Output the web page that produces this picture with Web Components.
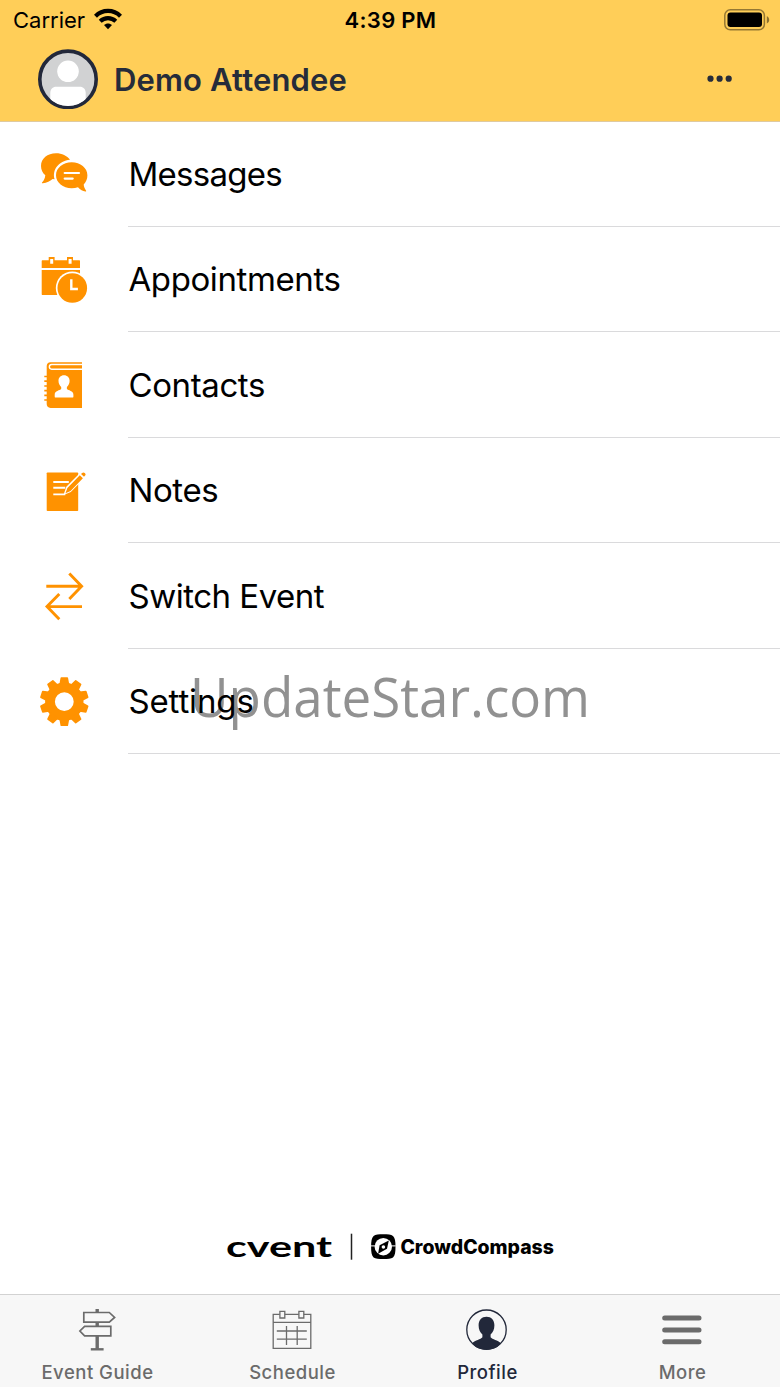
<!DOCTYPE html>
<html lang="en">
<head>
<meta charset="utf-8">
<title>Profile</title>
<style>
  body {
    margin: 0;
    background: #fff;
    font-family: Inter, Roboto, "Liberation Sans", sans-serif;
  }
</style>
</head>
<body>
<profile-screen></profile-screen>

<script>
const menuIcons = {
  messages: /*html*/`
    <path d="M17 4.3C8.500 4.300 2 9.500 2 17c0 4 1.700 7 4.300 9.200C6 29.500 4.800 31.500 3.200 33.200c-.6.700-.2 1.200.6 1C8 33.800 11 32.200 13.600 30l2 .2C13 21 19.500 12 31 10.800 28 6.800 23 4.300 17 4.300z"/>
    <path d="M32.700 13.300c-8.700 0-15.700 5.600-15.700 13s7 13 15.700 13c2.300 0 4.400-.3 6.300-1 2.300 2.500 4.800 3.900 7.300 4.200.8.100 1.100-.4.700-1-1.300-1.800-2.200-3.800-2.300-5.900 2.400-2.400 3.700-5.700 3.700-9.300 0-7.400-7-13-15.700-13z"/>
    <path d="M25.700 24h14.300M25.700 29.600h8" stroke="#fff" stroke-width="2.200" stroke-linecap="round"/>`,
  appointments: /*html*/`
    <path d="M3.200 5.300h6.500V2h5.900v3.300H28V2h6v3.300h6.500l.5.500V13H2.700V5.800zM2.700 15H41v25H3.200l-.5-.5z"/>
    <path d="M11.200 4h3v4.700h-3zM29.600 4h3v4.700h-3z" fill="#fff"/>
    <circle cx="33.300" cy="33" r="16.500" fill="#fff"/>
    <circle cx="33.300" cy="33" r="14.800"/>
    <path d="M32.300 24.300V34h6.600" fill="none" stroke="#fff" stroke-width="2.400"/>`,
  contacts: /*html*/`
    <path d="M11.500 2.200H43v45.700H11.500c-2.400 0-3.800-1.500-3.800-3.800V6c0-2.300 1.500-3.800 3.800-3.800z"/>
    <path d="M5.300 16.500h3M5.300 21.200h3M5.300 26h3M5.300 30.700h3M5.300 35.400h3M5.300 40h3" stroke="#ff9200" stroke-width="1.700"/>
    <path d="M43 4.500H12.600c-3 0-3 4.700 0 4.700H43" fill="none" stroke="#fff" stroke-width="1.400"/>
    <path d="M43 6.900H13" stroke="#ff9200" stroke-width="2"/>
    <path d="M25 15.200c-3.300 0-5.500 2.300-5.500 5.600 0 2.900 1.100 4.600 2.700 6.100v2.200c-1.300 1.400-6.500 1.700-6.500 5.700v1.600c0 .8.400 1.200 1.200 1.200h16.300c.8 0 1.200-.4 1.200-1.200v-1.600c0-4-5.200-4.300-6.500-5.700v-2.200c1.600-1.500 2.700-3.200 2.700-6.100 0-3.300-2.300-5.600-5.600-5.600z" fill="#fff"/>`,
  notes: /*html*/`
    <rect x="7.700" y="6.400" width="31.500" height="38.600" rx=".8"/>
    <path d="M14.300 16h15.500M14.300 21.800h12M14.300 28.400h12" stroke="#fff" stroke-width="1.900"/>
    <path d="M24.500 29l2.800-8.200L41.500 6.500l5 4.500-14.700 15z" fill="#fff"/>
    <path d="M26.500 27.300l1.900-5.400L40.800 9.300l3.100 3-12.300 12.800zM42 8l1.200-1.100c.8-.8 1.800-.6 2.600.1.900.8 1.100 1.800.3 2.600L45 10.800z"/>`,
  switch: /*html*/`
    <path d="M7.300 15.200h35M30.300 2.600l12.300 12.600-12.300 12.700M43 35.600H8.400M20.300 22.900L8 35.600l12.300 12.600" fill="none" stroke="#ff9200" stroke-width="2.900"/>`,
  settings: /*html*/`
    <circle cx="25.300" cy="24.700" r="14.300" fill="none" stroke="#ff9200" stroke-width="9.800"/>
    <g stroke="#ff9200" stroke-width="1.600" stroke-linejoin="round">
      ${[0, 36, 72, 108, 144, 180, 216, 252, 288, 324].map(angle => `<path d="M22.300 1.100h6l1.100 6H21.200z" transform="rotate(${angle} 25.300 24.700)"/>`).join('')}
    </g>`
}

const tabIcons = {
  guide: /*html*/`
    <g fill="none" stroke="currentColor" stroke-width="1.700">
      <path d="M9.800 5.500h25.500l5.300 4.900-5.300 4.700H9.800zM36.800 19.400H10.600l-4.700 4.600 4.700 4.800h26.200z"/>
      <path d="M23.200 2v3.500M23.200 15v4.400M23.200 29v13" stroke-width="3.400"/>
      <path d="M16.800 42.300h12.800" stroke-width="2.400"/>
    </g>`,
  schedule: /*html*/`
    <g fill="none" stroke="currentColor" stroke-width="1.300">
      <path d="M10.800 7.400H4.200v34h37.600v-34h-7M15.800 7.400h14M4.200 15.300h37.600M17.500 19v19M28.200 19v19M7.800 24h30M7.800 32.200h30"/>
      <path d="M10.900 4.300h4.900V11h-4.900zM29.900 4.300h4.900V11h-4.900z"/>
    </g>`,
  profile: /*html*/`
    <circle cx="22.500" cy="22.700" r="19.700" fill="none" stroke="currentColor" stroke-width="1.300"/>
    <path d="M22.500 9.700c-4.700 0-7.900 3.400-7.900 8.500 0 4.200 1.500 7.200 3.800 9.400v2.600c-1.800 2.400-7 2.800-10.500 6 3.500 4.200 8.700 6.500 14.600 6.500s11.100-2.300 14.600-6.500c-3.500-3.200-8.700-3.600-10.500-6v-2.600c2.300-2.200 3.800-5.200 3.800-9.400 0-5.100-3.200-8.500-7.900-8.500z" fill="currentColor"/>`,
  more: /*html*/`
    <path d="M5.700 11.100H40M5.700 22.900H40M5.700 34.700H40" stroke="currentColor" stroke-width="5" stroke-linecap="round"/>`
}

class StatusBar extends HTMLElement {
  constructor () {
    super()
    this.shadow = this.attachShadow({ mode: 'open' })
  }

  connectedCallback () {
    this.render()
  }

  render () {
    this.shadow.innerHTML =
    /*html*/`
    <style>
      :host{
        align-items: center;
        box-sizing: border-box;
        color: #000;
        display: grid;
        font-size: 22px;
        grid-template-columns: 1fr auto 1fr;
        height: 40px;
        line-height: 40px;
        padding: 0 10px 0 13px;
      }

      .carrier{
        align-items: center;
        display: flex;
        gap: 9px;
      }

      .carrier svg{
        margin-top: -2px;
      }

      .time{
        font-weight: 600;
        letter-spacing: 0.3px;
        margin-right: 2px;
      }

      .battery{
        display: flex;
        justify-content: end;
        margin-top: -1px;
      }

      svg{
        display: block;
      }
    </style>

    <div class="carrier">
      <span>Carrier</span>
      <svg width="28" height="22" viewBox="0 0 28 22" fill="none" stroke="#000" stroke-width="4.200">
        <path d="M1.500 8.200C8.500 1.200 19.500 1.200 26.500 8.200"/>
        <path d="M6.200 13.200c4.500-4.200 11.100-4.200 15.600 0"/>
        <path d="M14 21.300l-4-4.200c2.300-2.100 5.700-2.100 8 0z" fill="#000" stroke="none"/>
      </svg>
    </div>
    <div class="time">4:39 PM</div>
    <div class="battery">
      <svg width="46" height="22" viewBox="0 0 46 22">
        <rect x=".8" y=".8" width="39.600" height="20" rx="5.500" fill="none" stroke="#000" stroke-opacity=".42" stroke-width="1.500"/>
        <rect x="3.500" y="3.600" width="34.500" height="14.400" rx="3"/>
        <path d="M42.800 7.200c3.200 1.200 3.200 6 0 7.200z" fill-opacity=".45"/>
      </svg>
    </div>
    `
  }
}
customElements.define('status-bar', StatusBar)

class ProfileHeader extends HTMLElement {
  constructor () {
    super()
    this.shadow = this.attachShadow({ mode: 'open' })
  }

  connectedCallback () {
    this.render()
  }

  render () {
    this.shadow.innerHTML =
    /*html*/`
    <style>
      :host{
        background-color: #ffce58;
        border-bottom: 1px solid #dfcaa0;
        box-sizing: border-box;
        color: #262c3a;
        display: block;
        height: 122px;
      }

      .row{
        align-items: center;
        display: flex;
        gap: 16px;
        height: 78px;
        padding: 0 47px 0 38px;
      }

      .name{
        flex: 1;
        font-size: 31px;
        font-weight: 600;
        letter-spacing: 0.15px;
        padding-top: 1px;
        white-space: nowrap;
      }

      svg{
        display: block;
      }
    </style>

    <status-bar></status-bar>
    <div class="row">
      <svg width="60" height="60" viewBox="0 0 60 60">
        <defs><clipPath id="face"><circle cx="30" cy="30" r="27"/></clipPath></defs>
        <circle cx="30" cy="30.300" r="28.200" fill="#d1d2d3" stroke="#22283a" stroke-width="3.600"/>
        <g fill="#fff" clip-path="url(#face)">
          <circle cx="30" cy="22.300" r="10.800"/>
          <path d="M12.300 60V44c0-4 2.300-6.300 6-6.300h23.400c3.700 0 6 2.300 6 6.300v16z"/>
        </g>
      </svg>
      <div class="name"><slot></slot></div>
      <svg width="26" height="8" viewBox="0 0 26 8" fill="#262c3a">
        <circle cx="3.500" cy="3.700" r="3.100"/>
        <circle cx="12.600" cy="3.700" r="3.100"/>
        <circle cx="21.700" cy="3.700" r="3.100"/>
      </svg>
    </div>
    `
  }
}
customElements.define('profile-header', ProfileHeader)

class MenuRow extends HTMLElement {
  constructor () {
    super()
    this.shadow = this.attachShadow({ mode: 'open' })
  }

  connectedCallback () {
    this.render()
  }

  render () {
    this.shadow.innerHTML =
    /*html*/`
    <style>
      :host{
        color: #000;
        display: grid;
        font-size: 33px;
        grid-template-columns: 128px 1fr;
        height: 105.5px;
      }

      .icon{
        display: flex;
        padding: 28px 0 0 39px;
      }

      .label{
        align-items: center;
        border-bottom: 1px solid #dadadc;
        display: flex;
        letter-spacing: var(--tracking, -0.4px);
        padding: 1px 0 0 0.5px;
      }
    </style>

    <div class="icon">
      <svg width="50" height="50" viewBox="0 0 50 50" fill="#ff9200">${menuIcons[this.getAttribute('icon')]}</svg>
    </div>
    <div class="label"><span><slot></slot></span></div>
    `
  }
}
customElements.define('menu-row', MenuRow)

class BrandFooter extends HTMLElement {
  constructor () {
    super()
    this.shadow = this.attachShadow({ mode: 'open' })
  }

  connectedCallback () {
    this.render()
  }

  render () {
    this.shadow.innerHTML =
    /*html*/`
    <style>
      :host{
        display: flex;
        height: 72px;
        justify-content: center;
      }
    </style>

    <svg width="332" height="50" viewBox="-2 -10 332 50">
      <text x="0" y="25" font-family="Lato" font-weight="700" font-size="29" textLength="106" lengthAdjust="spacingAndGlyphs">cvent</text>
      <path d="M125.500 1.700v26" stroke="#222" stroke-width="1.500"/>
      <path d="M157.300 2.300c4.500 0 7.800.4 9.700 1.600 2 1.700 2.500 5.500 2.500 10.800s-.5 9-2.500 10.700c-1.900 1.300-5.200 1.700-9.700 1.700s-7.800-.4-9.700-1.700c-2-1.700-2.500-5.400-2.500-10.700s.5-9.100 2.500-10.800c1.900-1.200 5.200-1.600 9.700-1.600z"/>
      <circle cx="157.300" cy="14.700" r="8.700" fill="#fff"/>
      <path d="M145 13.900h4.500M165 13.900h4.700" stroke="#fff" stroke-width="1"/>
      <path d="M162.800 8.400l-1.800 8.400-8.900 5 1.500-8.500z"/>
      <circle cx="157.400" cy="15" r="1.800" fill="#fff"/>
      <text x="174.400" y="22" font-family="Inter" font-weight="800" font-size="19.500" textLength="153.500" lengthAdjust="spacingAndGlyphs">CrowdCompass</text>
    </svg>
    `
  }
}
customElements.define('brand-footer', BrandFooter)

class TabItem extends HTMLElement {
  constructor () {
    super()
    this.shadow = this.attachShadow({ mode: 'open' })
  }

  connectedCallback () {
    this.render()
  }

  render () {
    this.shadow.innerHTML =
    /*html*/`
    <style>
      :host{
        align-items: center;
        color: #6b6b6b;
        display: flex;
        flex-direction: column;
        font-size: 18.500px;
        font-weight: 500;
        letter-spacing: 0.5px;
        line-height: 24px;
        padding-top: 12px;
      }

      :host([active]){
        color: #22283a;
      }

      svg{
        display: block;
        margin: 0 1px 7px 0;
      }
    </style>

    <svg width="46" height="46" viewBox="0 0 46 46">${tabIcons[this.getAttribute('icon')]}</svg>
    <span><slot></slot></span>
    `
  }
}
customElements.define('tab-item', TabItem)

class ProfileScreen extends HTMLElement {
  constructor () {
    super()
    this.shadow = this.attachShadow({ mode: 'open' })
  }

  connectedCallback () {
    this.render()
  }

  render () {
    this.shadow.innerHTML =
    /*html*/`
    <style>
      :host{
        display: flex;
        flex-direction: column;
        height: 1387px;
        position: relative;
        width: 780px;
      }

      main{
        flex: 1;
        margin-top: -1px;
        position: relative;
        z-index: 1;
      }

      menu-row[icon="messages"]{
        --tracking: -0.75px;
      }

      menu-row[icon="switch"]{
        --tracking: -0.5px;
      }

      menu-row[icon="settings"]{
        --tracking: -0.15px;
      }

      /* the watermark lies under the menu texts */
      .watermark{
        left: 188px;
        position: absolute;
        top: 640px;
      }

      nav{
        background-color: #f7f7f7;
        border-top: 1px solid #d2d2d2;
        box-sizing: border-box;
        display: grid;
        grid-template-columns: repeat(4, 1fr);
        height: 93px;
      }
    </style>

    <profile-header>Demo Attendee</profile-header>
    <svg class="watermark" width="420" height="110">
      <text x="2" y="77" fill="#919191" font-family="Open Sans" font-size="55" textLength="400" lengthAdjust="spacingAndGlyphs">UpdateStar.com</text>
    </svg>
    <main>
      <menu-row icon="messages">Messages</menu-row>
      <menu-row icon="appointments">Appointments</menu-row>
      <menu-row icon="contacts">Contacts</menu-row>
      <menu-row icon="notes">Notes</menu-row>
      <menu-row icon="switch">Switch Event</menu-row>
      <menu-row icon="settings">Settings</menu-row>
    </main>
    <brand-footer></brand-footer>
    <nav>
      <tab-item icon="guide">Event Guide</tab-item>
      <tab-item icon="schedule">Schedule</tab-item>
      <tab-item icon="profile" active>Profile</tab-item>
      <tab-item icon="more">More</tab-item>
    </nav>
    `
  }
}
customElements.define('profile-screen', ProfileScreen)
</script>
</body>
</html>
